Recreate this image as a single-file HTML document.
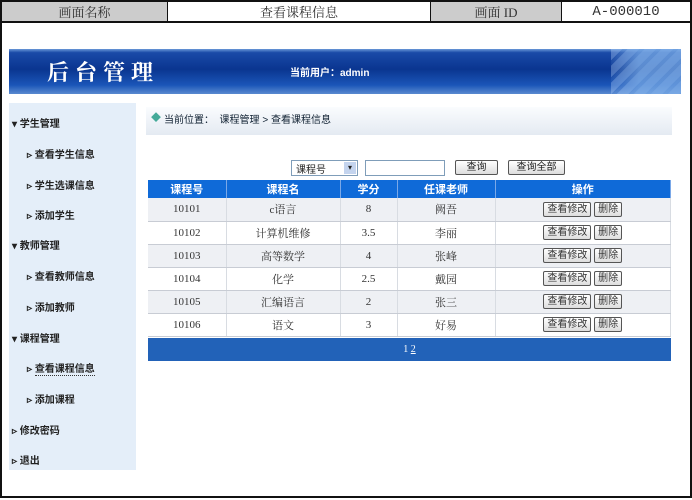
<!DOCTYPE html>
<html><head><meta charset="utf-8"><style>
*{margin:0;padding:0;box-sizing:border-box}
body{width:692px;height:500px;background:#fff;position:relative;overflow:hidden;font-family:"Liberation Serif","Noto Serif CJK SC",serif;font-size:12px;color:#222}
.a{position:absolute}
.top{left:0;top:0;width:692px;height:23px;border:2px solid #111;display:flex}
.top div{height:100%;display:flex;align-items:center;justify-content:center;font-size:13px;color:#333;border-right:1px solid #111}
.frame{left:0;top:21px;width:692px;height:477px;border:2px solid #111;border-top:none}
.banner{left:9px;top:49px;width:672px;height:45px;background:linear-gradient(#6a98d8 0,#1a4aa8 8%,#0a3590 45%,#1a55b8 80%,#5a8ad0 100%)}
.side{left:9px;top:103px;width:127px;height:367px;background:#e4eef9}
.side div{position:absolute;font-family:"Liberation Sans","Noto Sans CJK SC",sans-serif;font-size:10px;font-weight:bold;color:#222}
.bc{left:146px;top:107px;width:526px;height:28px;background:linear-gradient(#fafcfe,#e4eaf2);font-family:"Liberation Sans","Noto Sans CJK SC",sans-serif;font-size:10px;padding:4px 0 0 18px;color:#123}
table{position:absolute;left:148px;top:180px;width:523px;border-collapse:collapse;font-size:11px}
th{background:#0f6ad8;color:#fff;height:18px;font-family:"Liberation Sans","Noto Sans CJK SC",sans-serif;font-size:11px;border-right:1px solid #7aa8e8}
td{height:23px;text-align:center;border-bottom:1px solid #c8ccd4;border-right:1px solid #d8dce2;color:#333}
tr:nth-child(even) td{background:#eef0f4}
.b{display:inline-block;border:1px solid #555;border-radius:2px;background:linear-gradient(#fff,#ddd);font-size:10px;padding:0 3px;line-height:13px;font-family:"Liberation Sans","Noto Sans CJK SC",sans-serif}
.foot{left:148px;top:338px;width:523px;height:23px;background:#2262b8;color:#fff;font-size:10px;text-align:center;line-height:23px}
</style></head><body>
<div class="a top"><div style="width:166px;background:#ccc">画面名称</div><div style="width:263px">查看课程信息</div><div style="width:131px;background:#ccc">画面 ID</div><div style="width:128px;border:none;font-family:'Liberation Mono',monospace;font-size:14px">A-000010</div></div>
<div class="a frame"></div>
<div class="a banner">
<div class="a" style="left:38px;top:7px;color:#fff;font-size:22px;font-weight:bold;letter-spacing:6px;font-family:'Noto Serif CJK SC',serif">后台管理</div>
<div class="a" style="left:281px;top:15px;color:#fff;font-size:10px;font-weight:bold;font-family:'Liberation Sans','Noto Sans CJK SC',sans-serif">当前用户：admin</div>
<div class="a" style="right:0;top:0;width:70px;height:45px;background:linear-gradient(90deg,rgba(90,140,210,0),rgba(120,170,230,.7) 40%),repeating-linear-gradient(135deg,rgba(180,210,250,.35) 0 8px,rgba(90,140,210,.15) 8px 12px)"></div>
</div>
<div class="a side">
<div style="left:3px;top:12px">▾ 学生管理</div>
<div style="left:18px;top:43px">▹ 查看学生信息</div>
<div style="left:18px;top:74px">▹ 学生选课信息</div>
<div style="left:18px;top:104px">▹ 添加学生</div>
<div style="left:3px;top:134px">▾ 教师管理</div>
<div style="left:18px;top:165px">▹ 查看教师信息</div>
<div style="left:18px;top:196px">▹ 添加教师</div>
<div style="left:3px;top:227px">▾ 课程管理</div>
<div style="left:18px;top:257px">▹ <span style="border-bottom:1px dotted #333">查看课程信息</span></div>
<div style="left:18px;top:288px">▹ 添加课程</div>
<div style="left:3px;top:319px">▹ 修改密码</div>
<div style="left:3px;top:349px">▹ 退出</div>
</div>
<div class="a bc"><span style="color:#4a9;position:absolute;left:5px;top:2px">◆</span>当前位置：&nbsp;&nbsp;课程管理 &gt; 查看课程信息</div>
<div class="a" style="left:291px;top:160px;width:67px;height:16px;border:1px solid #7f9db9;font-size:10px;padding-left:4px;font-family:'Liberation Sans','Noto Sans CJK SC',sans-serif">课程号<span style="position:absolute;right:1px;top:1px;width:12px;height:12px;background:#c4d4ee;font-size:8px;text-align:center;line-height:12px">▾</span></div>
<div class="a" style="left:365px;top:160px;width:80px;height:16px;border:1px solid #7f9db9"></div>
<div class="a b" style="left:455px;top:160px;width:43px;height:15px;text-align:center">查询</div>
<div class="a b" style="left:508px;top:160px;width:57px;height:15px;text-align:center">查询全部</div>
<table>
<tr><th style="width:78px">课程号</th><th style="width:114px">课程名</th><th style="width:57px">学分</th><th style="width:98px">任课老师</th><th>操作</th></tr>
<tr><td>10101</td><td>c语言</td><td>8</td><td>阙吾</td><td><span class="b">查看修改</span> <span class="b">删除</span></td></tr>
<tr><td>10102</td><td>计算机维修</td><td>3.5</td><td>李丽</td><td><span class="b">查看修改</span> <span class="b">删除</span></td></tr>
<tr><td>10103</td><td>高等数学</td><td>4</td><td>张峰</td><td><span class="b">查看修改</span> <span class="b">删除</span></td></tr>
<tr><td>10104</td><td>化学</td><td>2.5</td><td>戴园</td><td><span class="b">查看修改</span> <span class="b">删除</span></td></tr>
<tr><td>10105</td><td>汇编语言</td><td>2</td><td>张三</td><td><span class="b">查看修改</span> <span class="b">删除</span></td></tr>
<tr><td>10106</td><td>语文</td><td>3</td><td>好易</td><td><span class="b">查看修改</span> <span class="b">删除</span></td></tr>
</table>
<div class="a foot">1 <u>2</u></div>
</body></html>
